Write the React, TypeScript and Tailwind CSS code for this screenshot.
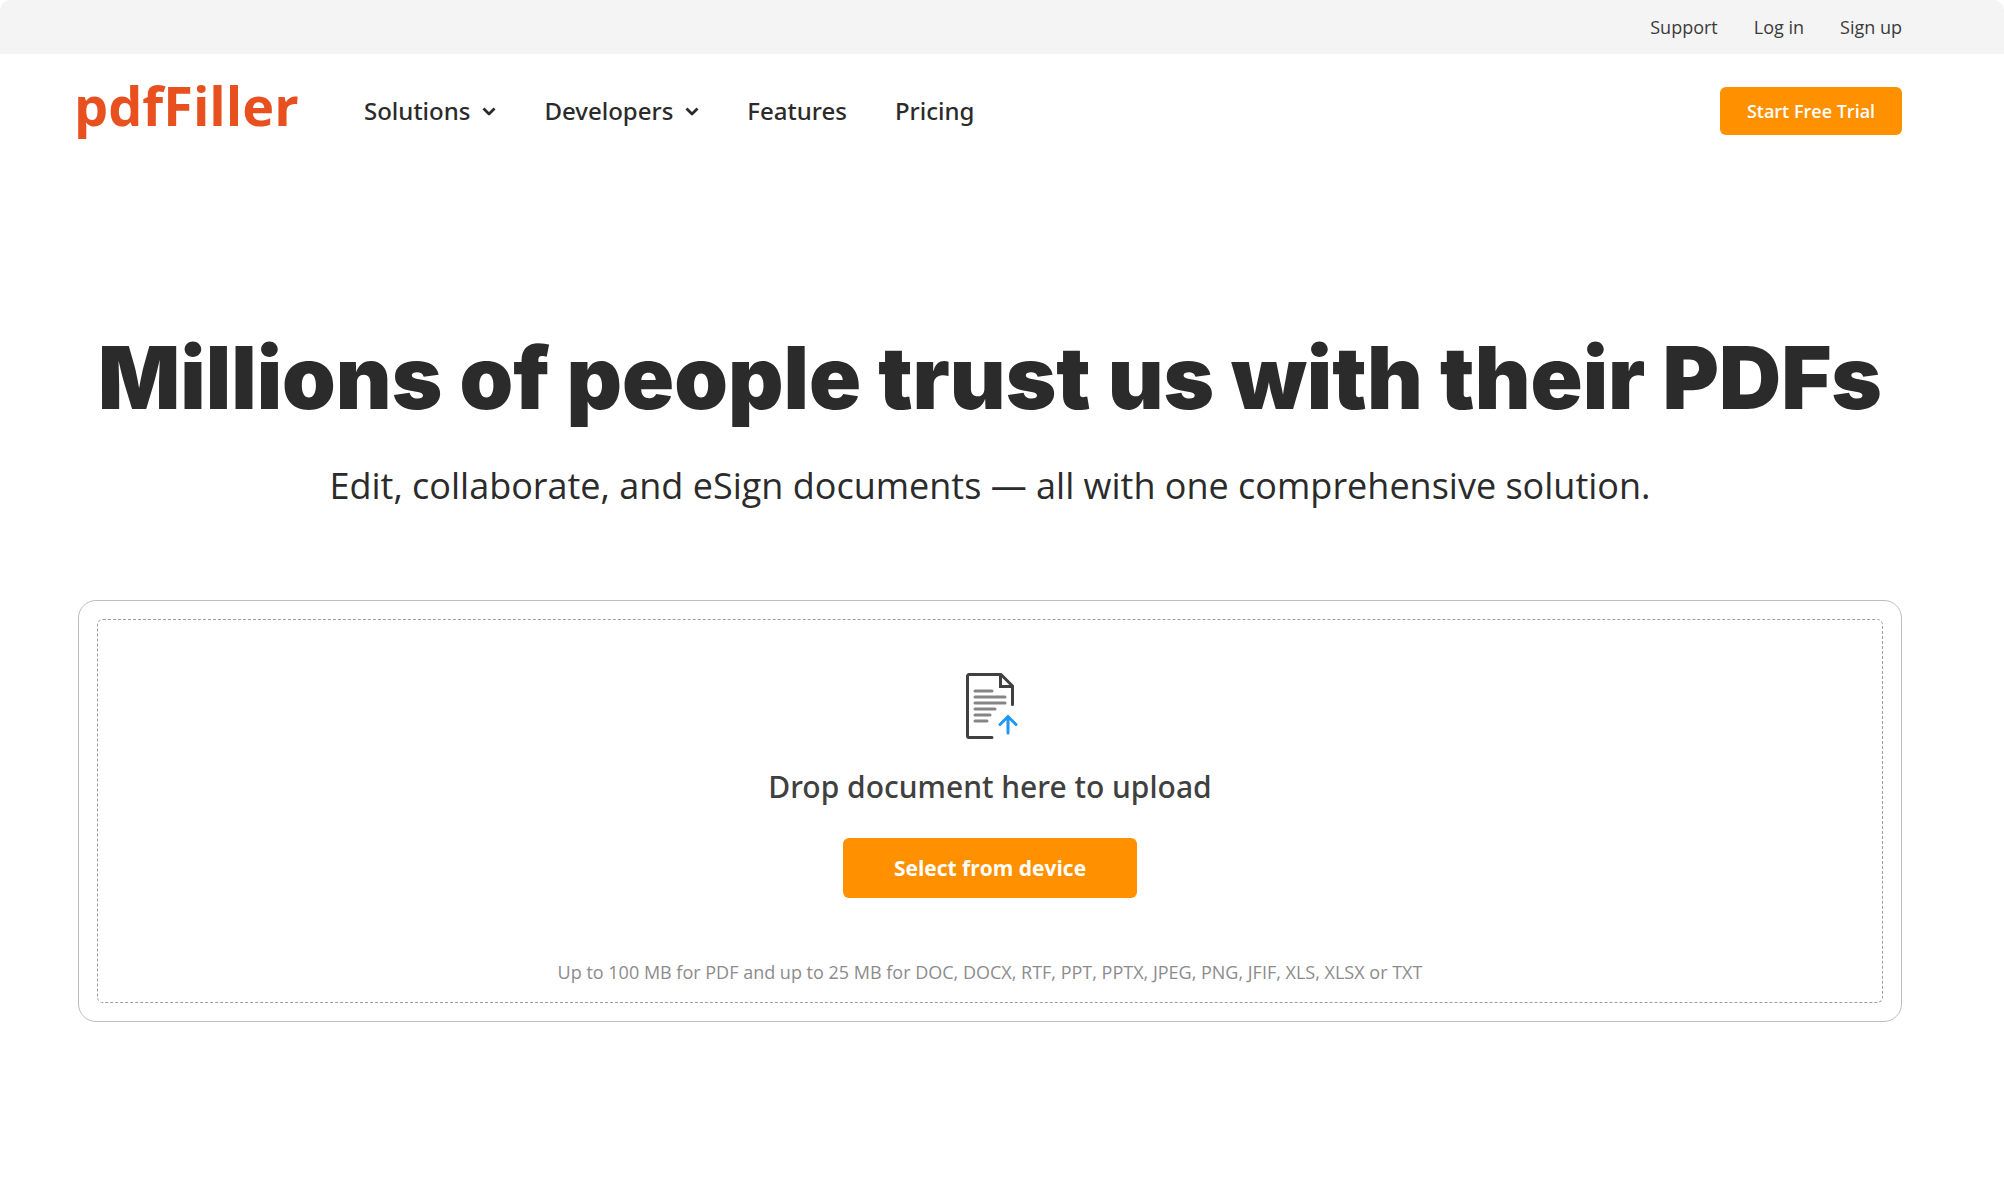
import React from "react";

const utilityLinks = ["Support", "Log in", "Sign up"];

function Chevron() {
  return (
    <svg className="mt-px h-3 w-[14px]" viewBox="0 0 14 12" fill="none" stroke="currentColor" strokeWidth="2.8" aria-hidden="true">
      <path d="M1.500 2.500 7 8l5.500-5.500" strokeLinejoin="round" />
    </svg>
  );
}

function UploadIcon() {
  return (
    <svg className="h-[66px] w-14" viewBox="-4 0 56 66" fill="none" aria-hidden="true">
      <g stroke="#404040" strokeWidth="3" strokeLinecap="round" strokeLinejoin="round">
        <path d="M26 64.500H3a1.500 1.500 0 0 1-1.500-1.500V3A1.500 1.500 0 0 1 3 1.500H35L46.500 13V31.500" />
        <path d="M34.500 2V13.500H46" strokeLinejoin="miter" />
      </g>
      <path
        d="M9 18H26M9 24H39M9 30H39M9 36H29M9 42H24M9 48H21"
        stroke="#858585"
        strokeWidth="3"
        strokeLinecap="round"
      />
      <path d="M42 60V44M34 51.500 42 43.500l8 8" stroke="#2196f3" strokeWidth="3" strokeLinecap="round" strokeLinejoin="miter" />
    </svg>
  );
}

export default function App() {
  return (
    <div className="min-h-screen bg-white font-['Open_Sans',sans-serif] text-[#2b2b2b]">
      <nav aria-label="Account" className="flex h-[54px] items-center justify-end gap-9 rounded-t-[10px] bg-[#f4f4f4] pr-[102px] pl-[78px] text-lg text-[#3b3b3b]">
        {utilityLinks.map((label) => (
          <a key={label} href="#">
            {label}
          </a>
        ))}
      </nav>

      <header className="flex h-[114px] items-center pr-[102px] pl-[78px]">
        <a href="#" className="-ml-1 w-[290px] pb-3 text-[54px] leading-none font-bold text-[#e8501f]">
          pdfFiller
        </a>
        <nav aria-label="Main" className="flex flex-1 items-center gap-12 font-['Noto_Sans',sans-serif] text-2xl font-medium">
          <button type="button" className="flex items-center gap-3">
            Solutions
            <Chevron />
          </button>
          <button type="button" className="flex items-center gap-3">
            Developers
            <Chevron />
          </button>
          <a href="#">Features</a>
          <a href="#">Pricing</a>
        </nav>
        <button type="button" className="h-12 w-[182px] rounded-md bg-[#ff9100] text-lg font-semibold text-white">
          Start Free Trial
        </button>
      </header>

      <main className="pr-[102px] pl-[78px]">
        <h1 className="mt-[155px] text-center font-['Inter',sans-serif] text-[86px] leading-[110px] font-black whitespace-nowrap">
          Millions of people trust us with their PDFs
        </h1>
        <p className="mt-[26px] text-center text-4xl leading-[54px]">
          Edit, collaborate, and eSign documents — all with one comprehensive solution.
        </p>

        <section aria-label="Upload" className="mt-[87px] rounded-[18px] border border-[#bdbdbd] p-[18px]">
          <div className="flex flex-col items-center rounded-md border border-dashed border-[#9e9e9e] pt-[53px] pb-4">
            <UploadIcon />
            <h2 className="mt-7 font-['Noto_Sans',sans-serif] text-3xl leading-10 font-medium text-[#404040]">
              Drop document here to upload
            </h2>
            <button type="button" className="mt-[31px] h-[60px] w-[294px] rounded-md bg-[#ff9100] pt-px text-[21px] font-bold text-white">
              Select from device
            </button>
            <p className="mt-[60px] text-lg leading-7 text-[#8c8c8c]">
              Up to 100 MB for PDF and up to 25 MB for DOC, DOCX, RTF, PPT, PPTX, JPEG, PNG, JFIF, XLS, XLSX or TXT
            </p>
          </div>
        </section>
      </main>
    </div>
  );
}
